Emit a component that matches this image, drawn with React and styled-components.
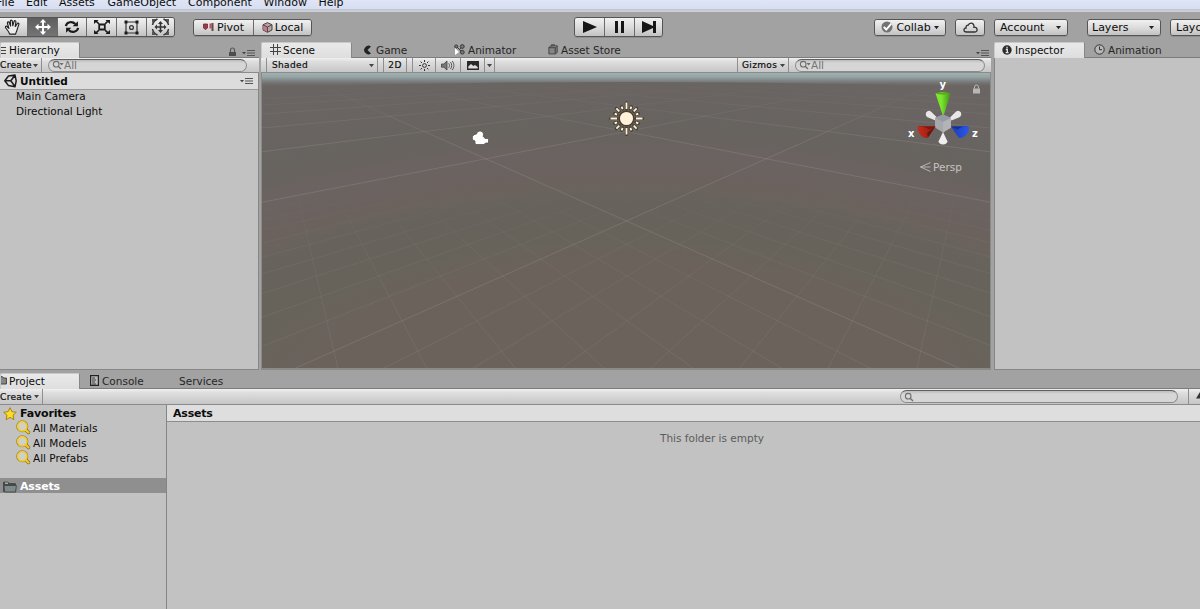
import React from 'react';
import styled, { createGlobalStyle } from 'styled-components';

const GlobalStyle = createGlobalStyle`
* {
  box-sizing: border-box;
}
body {
  margin: 0;
  background: #a2a2a2;
}
`

const Editor = styled.div`
display: flex;
flex-direction: column;
width: 1200px;
height: 609px;
overflow: hidden;
background: #a2a2a2;
color: #0c0c0c;
font-family: "DejaVu Sans", Verdana, sans-serif;
font-size: 10.5px;
white-space: nowrap;
`

const MenuBar = styled.div`
display: flex;
flex: none;
height: 12px;
padding-left: 1px;
overflow: hidden;
background: linear-gradient(#dfe5f5, #d7def0 9px, #a9afc0 10px, #e4e7f0 11px, #b9b9bb 12px);
`

const MenuItem = styled.span`
flex: none;
width: ${props => props.$w}px;
margin-top: -5px;
font-size: 11px;
line-height: 15px;

&:first-child {
  margin-left: -5px;
}
`

const Toolbar = styled.div`
display: flex;
flex: none;
align-items: center;
height: 30px;
`

const ButtonGroup = styled.div`
display: flex;
flex: none;
height: ${props => props.$h || 17}px;
margin-left: ${props => props.$ml || 0}px;
border: 1px solid #555;
border-radius: 3px;
overflow: hidden;
box-shadow: 0 1px 0 #8e8e8e;
`

const Button = styled.div`
display: flex;
flex: none;
align-items: center;
justify-content: ${props => props.$justify || 'center'};
gap: ${props => props.$gap || 0}px;
width: ${props => props.$w}px;
padding: ${props => props.$pad || 0};
font-size: 11px;
background: ${props => props.$active
    ? 'linear-gradient(#5e5e5e, #747474)'
    : 'linear-gradient(#f1f1f1, #dcdcdc 50%, #c2c2c2)'};

& + & {
  border-left: 1px solid #6b6b6b;
}
`

const Docks = styled.div`
display: flex;
flex: none;
height: 328px;
`

const Dock = styled.div`
display: flex;
flex: none;
flex-direction: column;
width: ${props => props.$w}px;
margin-right: ${props => props.$mr || 0}px;
`

const TabStrip = styled.div`
display: flex;
flex: none;
align-items: stretch;
height: 16px;
border-bottom: 1px solid #7c7c7c;
`

const Tab = styled.div`
display: flex;
flex: none;
align-items: center;
width: ${props => props.$w}px;
height: ${props => props.$active ? 16 : 15}px;
padding-left: ${props => props.$pl || 0}px;
gap: ${props => props.$gap || 0}px;
color: ${props => props.$active ? '#0c0c0c' : '#262626'};
border-radius: 2px 2px 0 0;
${props => props.$active && `
padding-bottom: 2px;
background: linear-gradient(#e9e9e9, #dedede);
border: 1px solid #c9c9c9;
border-bottom: 0;
border-right-color: #868686;
`}
`

const StripIcons = styled.div`
display: flex;
align-items: flex-end;
gap: 5px;
margin-left: auto;
padding-right: ${props => props.$pr}px;
`

const PanelBar = styled.div`
display: flex;
flex: none;
align-items: center;
height: ${props => props.$h || 15}px;
padding-left: ${props => props.$pl || 0}px;
border-bottom: 1px solid #8b8b8b;
background: linear-gradient(#f0f0f0, #dedede 25%, #c6c6c6);
`

const BarItem = styled.div`
display: flex;
flex: none;
align-items: center;
justify-content: ${props => props.$between ? 'space-between' : 'center'};
width: ${props => props.$w}px;
height: 100%;
margin-left: ${props => props.$ml || 0}px;
padding: ${props => props.$pad || 0};
font-size: 9px;
letter-spacing: 0.35px;
-webkit-text-stroke: 0.2px #111;
border-right: 1px solid #8e8e8e;
${props => props.$left && 'border-left: 1px solid #8e8e8e;'}
`

const SearchField = styled.div`
display: flex;
flex: none;
align-items: center;
width: ${props => props.$w}px;
height: 13px;
margin-left: ${props => props.$ml}px;
padding-left: 3px;
border: 1px solid #8a8a8a;
border-top-color: #5f5f5f;
border-radius: 7px;
background: linear-gradient(#bcbcbc, #d6d6d6 3px);
color: #747474;
font-size: 10.5px;
line-height: 10px;
`

const Panel = styled.div`
flex: 1;
background: #c2c2c2;
border: solid #868686;
border-width: 0 1px 1px ${props => props.$left ? 1 : 0}px;
`

const SceneHeader = styled.div`
display: flex;
align-items: center;
height: 17px;
padding: 0 5px 0 4px;
gap: 3px;
background: #dcdcdc;
border-bottom: 1px solid #999;
font-weight: bold;
font-size: 10.5px;

svg:last-child {
  margin-left: auto;
}
`

const TreeRow = styled.div`
display: flex;
align-items: center;
height: 15px;
padding-left: ${props => props.$pl}px;
padding-top: ${props => props.$bold ? 2 : 0}px;
padding-bottom: ${props => props.$pb || 0}px;
gap: ${props => props.$gap || 0}px;
font-size: ${props => props.$bold ? 11 : 10.5}px;
font-weight: ${props => props.$bold ? 'bold' : 'normal'};
letter-spacing: ${props => props.$bold ? -0.15 : 0}px;
${props => props.$selected && `
margin-top: 13px;
background: #8f8f8f;
color: #fff;
`}
`

const SceneView = styled.div`
flex: none;
height: 297px;
border: solid #8a8a87;
border-width: 0 1px 2px 1px;
`

const SceneCanvas = styled.svg`
display: block;
`

const ProjectDock = styled.div`
display: flex;
flex: 1;
flex-direction: column;
margin-top: 3px;
`

const ProjectBody = styled.div`
display: flex;
flex: 1;
background: #c2c2c2;
`

const Sidebar = styled.div`
flex: none;
width: 167px;
border-right: 1px solid #858585;
`

const Content = styled.div`
flex: 1;
`

const Breadcrumb = styled.div`
height: 17px;
padding-left: 6px;
background: #dedede;
border-bottom: 1px solid #8c8c8c;
font-weight: bold;
font-size: 11px;
line-height: 18px;
letter-spacing: -0.2px;
`

const EmptyNote = styled.div`
width: 118px;
margin: 10px 0 0 486px;
color: #5c5c5c;
text-align: center;
font-size: 10.5px;
`

const Arrow = ({ size = 5, color = '#222' }) => (
  <svg width={size} height={size} viewBox="0 0 6 6"><path d="M0 1.2h6L3 5z" fill={color} /></svg>
);

const MenuGlyph = () => (
  <svg width="13" height="8" viewBox="0 0 13 8">
    <path d="M0 3h4L2 5.3z" fill="#444" />
    <path d="M5 1.5h8M5 4h8M5 6.5h8" stroke="#555" strokeWidth="1.1" />
  </svg>
);

const LockGlyph = () => (
  <svg width="9" height="10" viewBox="0 0 9 10">
    <path d="M2.5 5V3a2 2 0 0 1 4 0v2" fill="none" stroke="#555" strokeWidth="1.1" />
    <path d="M1 5h7v4H1z" fill="#4d4d4d" />
  </svg>
);

const SearchGlyph = ({ arrow }) => (
  <svg width="12" height="10" viewBox="0 0 12 10">
    <circle cx="4.2" cy="4.2" r="2.8" fill="none" stroke="#6e6e6e" strokeWidth="1.1" />
    <path d="M6.2 6.2L9 9" stroke="#6e6e6e" strokeWidth="1.3" />
    {arrow && <path d="M7.5 3h4.2L9.6 5.4z" fill="#6e6e6e" />}
  </svg>
);

const HandIcon = () => (
  <svg width="17" height="17" viewBox="0 0 18 18" fill="#ececec" stroke="#222" strokeWidth="1.2" strokeLinejoin="round">
    <path d="M6 16C5.5 13 2 10.5 1.5 8.5c0-1.3 1.6-1.3 2.6.5L5.2 10 3.6 4.5c-.3-1.6 1.500-2 2-.5L7 7.5 6.7 2.500c0-1.700 1.900-1.700 2.100 0L9.300 7.2 10.6 2.700c.5-1.500 2.200-1 2 .5L11.900 8 14 5c.9-1.200 2.300-.4 1.700 1-1 2.600-1.500 4.500-2.200 6.500-.4 1.200-1 2-1.200 3.500z" />
  </svg>
);

const MoveIcon = () => (
  <svg width="18" height="18" viewBox="0 0 18 18">
    <path d="M9 1l3.200 3.500H10V8h3.500V5.800L17 9l-3.500 3.200V10H10v3.500h2.200L9 17l-3.200-3.500H8V10H4.500v2.200L1 9l3.500-3.200V8H8V4.500H5.800z" fill="#fff" />
  </svg>
);

const RotateIcon = () => (
  <svg width="16" height="16" viewBox="0 0 17 16">
    <path d="M2 7C2.700 2.500 9 1.500 12 4.800M15 9c-.7 4.500-7 5.500-10 2.200" fill="none" stroke="#1b1b1b" strokeWidth="2.3" />
    <path d="M14.800 2v5.300H9.200zM2.200 14V8.700h5.600z" fill="#1b1b1b" />
  </svg>
);

const ScaleIcon = () => (
  <svg width="18" height="16" viewBox="0 0 18 16" fill="#1b1b1b">
    <path d="M6.200 5.500h5.600v5H6.200z" fill="none" stroke="#1b1b1b" strokeWidth="1.8" />
    <path d="M1 1h4.500L4.300 2.200 6.500 4.200 5.200 5.300 3 3.300 1 5zM17 1h-4.500l1.200 1.200-2.200 2 1.300 1.100 2.200-2L17 5zM1 15h4.500l-1.200-1.200 2.200-2-1.300-1.100-2.200 2L1 11zM17 15h-4.500l1.200-1.200-2.200-2 1.300-1.100 2.200 2L17 11z" />
  </svg>
);

const RectIcon = () => (
  <svg width="17" height="17" viewBox="0 0 17 17">
    <path d="M3 3h11v11H3z" fill="none" stroke="#333" strokeWidth="1.2" />
    <path d="M1.500 1.500h3v3h-3zM12.500 1.500h3v3h-3zM1.500 12.500h3v3h-3zM12.500 12.500h3v3h-3z" fill="#1b1b1b" />
    <circle cx="8.5" cy="8.5" r="1.900" fill="none" stroke="#333" strokeWidth="1.3" />
  </svg>
);

const TransformIcon = () => (
  <svg width="19" height="18" viewBox="0 0 19 18">
    <path d="M9.500 3l2.500 3h-1.700v2.200h2.700V6.500L15.500 9 13 11.500V9.800h-2.700V12H12l-2.500 3L7 12h1.700V9.800H6v1.700L3.500 9 6 6.500v1.700h2.700V6H7z" fill="#333" />
    <path d="M1.500 7C2 4 4 2 6.500 1M12.500 1c2.500 1 4.500 3 5 6M17.500 11c-.5 3-2.500 5-5 6M6.500 17c-2.500-1-4.500-3-5-6" fill="none" stroke="#333" strokeWidth="1.500" />
    <path d="M1 1h4L1 5zM18 1h-4l4 4zM1 17h4l-4-4zM18 17h-4l4-4z" fill="#555" />
  </svg>
);

const PivotIcon = () => (
  <svg width="12" height="10" viewBox="0 0 12 10">
    <path d="M.5 2h4v4L2.500 7.500.5 6z" fill="#a83246" stroke="#5b3039" strokeWidth=".8" />
    <path d="M6.500 1.500h2v5h-2z" fill="#d3455c" /><path d="M8.500 1h2v8h-2z" fill="#5e4a4e" />
  </svg>
);

const CubeIcon = () => (
  <svg width="11" height="11" viewBox="0 0 11 11" strokeLinejoin="round">
    <path d="M5.500.7l4.500 2v5.300l-4.500 2.300L1 8V2.700z" fill="#b5a6a6" stroke="#4d4141" />
    <path d="M1.400 3.200l4.100 2v4.700L1.400 7.700z" fill="#c8788a" />
    <path d="M1 2.800l4.500 2.200L10 2.800M5.500 5v5" fill="none" stroke="#4d4141" strokeWidth=".9" />
  </svg>
);

const CheckIcon = () => (
  <svg width="12" height="12" viewBox="0 0 12 12">
    <circle cx="6" cy="6" r="5.500" fill="#737373" />
    <path d="M2.800 5.800l2.500 2.700 5-5.800" fill="none" stroke="#fff" strokeWidth="1.900" />
  </svg>
);

const CloudIcon = () => (
  <svg width="15" height="11" viewBox="0 0 15 11">
    <path d="M3.500 10C.2 10 .2 6 3 6c-.2-2 1-3 2.200-2.800C6.200.3 10.500.2 11 4c0 .8-.2 1.200-.2 1.200C15 5 15 10 12 10z" fill="none" stroke="#333" strokeWidth="1.300" />
  </svg>
);

const HashIcon = () => (
  <svg width="11" height="11" viewBox="0 0 11 11"><path d="M3.500 0v11M7.500 0v11M0 3.500h11M0 7.500h11" stroke="#444" /></svg>
);

const GameIcon = () => (
  <svg width="9" height="10" viewBox="0 0 9 10"><path d="M8 1.500A4.300 4.300 0 1 0 8 8.500L4.500 5z" fill="#222" /></svg>
);

const AnimatorIcon = () => (
  <svg width="11" height="11" viewBox="0 0 11 11" fill="#777" stroke="#333" strokeWidth=".9">
    <path d="M2.500 2.500l6 6M8.500 2.500l-3 3" />
    <circle cx="2.200" cy="2.500" r="1.600" /><circle cx="8.300" cy="2.500" r="1.900" /><circle cx="8.300" cy="8.200" r="1.900" />
    <path d="M1 4v7l4-3z" fill="#fff" stroke="none" />
  </svg>
);

const StoreIcon = () => (
  <svg width="10" height="11" viewBox="0 0 10 11" fill="#777" stroke="#444" strokeWidth=".8">
    <path d="M.8 3.500h6.500v6.500H.8zM7.300 3.500l2-1.500v6.500l-2 1.500M.8 3.500l2-1.700h6.500M3.500 2V.7h3V2" /><path d="M3 5v4M5 5v4" stroke="#999" />
  </svg>
);

const InfoIcon = () => (
  <svg width="10" height="10" viewBox="0 0 10 10"><circle cx="5" cy="5" r="4.700" fill="#2b2b2b" /><path d="M5 1.700v1.500M3.800 4.500h1.500v3M3.600 7.700h3" stroke="#e8e8e8" strokeWidth="1.300" fill="none" /></svg>
);

const ClockIcon = () => (
  <svg width="11" height="11" viewBox="0 0 11 11" fill="none" stroke="#333"><circle cx="5.500" cy="5.500" r="4.700" fill="#b8b8b8" /><path d="M5.500 2.500v3.200H8" /></svg>
);

const ListIcon = () => (
  <svg width="6" height="8" viewBox="0 0 6 8"><path d="M0 1.500h5M0 4.500h5M0 7.500h5" stroke="#444" /></svg>
);

const ConsoleIcon = () => (
  <svg width="9" height="11" viewBox="0 0 9 11"><path d="M.6.6h7.800v9.800H.6z" fill="#bbb" stroke="#222" strokeWidth="1.200" /><path d="M2 3h3M2 5h4M2 7h3M2 9h4" stroke="#333" strokeWidth=".9" /></svg>
);

const TabFolderIcon = () => (
  <svg width="6" height="9" viewBox="0 0 6 9"><path d="M-1 .7h2.500l1 1.300h2.900v6H-1z" fill="#888" stroke="#444" /></svg>
);

const SunIcon = () => (
  <svg width="11" height="11" viewBox="0 0 11 11" stroke="#333" fill="none"><circle cx="5.500" cy="5.500" r="1.900" /><path d="M5.500 0v2M5.500 9v2M0 5.500h2M9 5.500h2M1.600 1.600L3 3M8 8l1.400 1.400M1.600 9.400L3 8M8 3l1.400-1.400" /></svg>
);

const SoundIcon = () => (
  <svg width="14" height="11" viewBox="0 0 14 11"><path d="M.5 4h2.300L6 1v9L2.800 7.200H.5z" fill="#777" stroke="#444" strokeWidth=".8" /><path d="M7.700 3.300c1 1.500 1 3 0 4.500M9.500 2c1.600 2.400 1.600 4.700 0 7M11.300 1c2.100 3 2.100 6 0 9" fill="none" stroke="#555" /></svg>
);

const ImageIcon = () => (
  <svg width="12" height="9" viewBox="0 0 12 9"><path d="M0 0h12v9H0z" fill="#292929" /><path d="M1.300 7.500V5.500L4 3l2.300 2L8 4l2.700 2v1.500z" fill="#ddd" /></svg>
);

const UnityIcon = () => (
  <svg width="13" height="14" viewBox="0 0 13 14" fill="none" stroke="#1c1c1c" strokeWidth="1.500" strokeLinejoin="round">
    <path d="M4.500 2L11 1l1.200 5.800L11 12.800 4.500 11.600.8 6.800zM6.800 6.800H1M6.800 6.800L11 1.200M6.800 6.800L11 12.500" />
  </svg>
);

const StarIcon = () => (
  <svg width="14" height="14" viewBox="0 0 14 14"><path d="M7 .7l1.900 4 4.400.5L10 8.200l.9 4.500L7 10.400l-3.900 2.300L4 8.200.7 5.200l4.400-.5z" fill="#ffdc24" stroke="#a8821b" strokeLinejoin="round" /></svg>
);

const MagnifierIcon = () => (
  <svg width="16" height="15" viewBox="0 0 16 15" fill="none">
    <path d="M10.500 9.500l3 3" stroke="#8b7117" strokeWidth="3.400" strokeLinecap="round" />
    <circle cx="7.300" cy="6.300" r="4.600" stroke="#9a8030" strokeWidth="2.900" />
    <circle cx="7.300" cy="6.300" r="4.600" fill="#d0d0c9" stroke="#f2cd2d" strokeWidth="1.700" />
    <path d="M10.800 10l2.700 2.500" stroke="#f2cd2d" strokeWidth="2" strokeLinecap="round" />
  </svg>
);

const FolderIcon = () => (
  <svg width="14" height="12" viewBox="0 0 14 12"><path d="M.6 10.500V1.200h4.500l1 1.500h6.300v8z" fill="#42494a" stroke="#444" /><path d="M1 4.500h12.400l-.8 6.500H1.500z" fill="#7e898a" stroke="#3b4243" strokeWidth=".8" /><path d="M2 2.200h3" stroke="#ddd" /></svg>
);

const FilterIcon = () => (
  <svg width="14" height="11" viewBox="0 0 14 11" fill="#333"><path d="M0 7.500L4 1l4 6.500z" /><circle cx="7.500" cy="3" r="2.500" /><path d="M6 6h6v4.500H6z" /></svg>
);

// ground grid: cell size along both axes in homogeneous units
const CELL = 0.0643;
const ORIGIN = [364.5, 148];
const VANISH_RIGHT = [722, -11];
const VANISH_LEFT = [5, -11];

const project = (a, b) => {
  const w = 1 + a + b;
  return [0, 1].map(i => ((ORIGIN[i] + a * VANISH_RIGHT[i] + b * VANISH_LEFT[i]) / w).toFixed(1));
};

const gridPath = (from, to, step, skip) => {
  let d = '';
  for (let i = from; i <= to; i += step) {
    if (i % skip === 0) continue;
    const k = i * CELL;
    const near = -0.8 - k;
    d += `M${project(k, near)}L${project(k, 60)}M${project(near, k)}L${project(60, k)}`;
  }
  return d;
};

const rays = Array.from({ length: 16 }, (_, i) => {
  const t = i * Math.PI / 8;
  const r = i % 4 === 0 ? 9.5 : 10.2;
  const len = i % 4 === 0 ? 16 : i % 2 === 0 ? 14.3 : 12.8;
  return `M${Math.cos(t) * r} ${Math.sin(t) * r}L${Math.cos(t) * len} ${Math.sin(t) * len}`;
}).join('');

const Scene = () => (
  <SceneCanvas width="728" height="295" viewBox="0 0 728 295">
    <defs>
      <radialGradient id="ground" gradientUnits="userSpaceOnUse" cx="0" cy="0" r="400" gradientTransform="translate(364 325) scale(2.44 1)">
        <stop offset="0.34" stopColor="#6b625c" />
        <stop offset="0.4" stopColor="#67635b" />
        <stop offset="0.49" stopColor="#67635c" />
        <stop offset="0.54" stopColor="#6b625e" />
        <stop offset="0.61" stopColor="#6b6361" />
        <stop offset="0.68" stopColor="#67635f" />
        <stop offset="0.8" stopColor="#6a6563" />
        <stop offset="1" stopColor="#6c6665" />
      </radialGradient>
      <linearGradient id="sky" x1="0" y1="0" x2="0" y2="1">
        <stop offset="0" stopColor="#a0b1b2" />
        <stop offset="0.3" stopColor="#94a3a3" />
        <stop offset="0.65" stopColor="#7b7f7f" stopOpacity="0.8" />
        <stop offset="1" stopColor="#6d6765" stopOpacity="0" />
      </linearGradient>
      <linearGradient id="nearFade" x1="0" y1="0" x2="0" y2="1">
        <stop offset="0.36" stopColor="#000" />
        <stop offset="0.58" stopColor="#999" />
        <stop offset="1" stopColor="#fff" />
      </linearGradient>
      <linearGradient id="farFade" x1="0" y1="0" x2="0" y2="1">
        <stop offset="0.03" stopColor="#000" />
        <stop offset="0.25" stopColor="#fff" />
      </linearGradient>
      <linearGradient id="red" x1="0" x2="1"><stop offset="0" stopColor="#c52c1d" /><stop offset="1" stopColor="#8f1a0e" /></linearGradient>
      <linearGradient id="blue" x1="0" x2="1"><stop offset="0" stopColor="#1c3cae" /><stop offset="1" stopColor="#2b57ee" /></linearGradient>
      <linearGradient id="green" x1="0" x2="1"><stop offset="0.4" stopColor="#7ce52d" /><stop offset="1" stopColor="#3d9411" /></linearGradient>
      <mask id="nearMask"><rect width="728" height="295" fill="url(#nearFade)" /></mask>
      <mask id="farMask"><rect width="728" height="295" fill="url(#farFade)" /></mask>
    </defs>
    <rect width="728" height="295" fill="url(#ground)" />
    <path d={gridPath(-30, 30, 1, 10)} stroke="#96908a" strokeOpacity="0.23" fill="none" mask="url(#nearMask)" />
    <path d={gridPath(-10, 60, 10)} stroke="#96918b" strokeOpacity="0.36" fill="none" mask="url(#farMask)" />
    <path d="M0 0H728V14Q364 4 0 14Z" fill="url(#sky)" />

    <path d="M213 70.500v-2.500q-3.500-1-2.500-4.500 1-2.500 4-2.500.5-3 3.500-3t3.500 3q0 1-.5 2.500 1.500 0 2 2h3.500v4.500h-3l-1.500 1.500h-7.500z" fill="#fff" stroke="#4f4a45" strokeWidth=".7" />

    <g transform="translate(364.5 45.5)">
      <path d={rays} stroke="#4a4032" strokeWidth="3.200" strokeLinecap="round" />
      <circle r="7.300" fill="#fff2d8" stroke="#4a4032" strokeWidth="1.500" />
      <path d={rays} stroke="#fff2d8" strokeWidth="1.800" />
    </g>

    <path d="M664 39.500q3-3.500 6 0l5 5-1.500 3-8.500-3.500q-2-2-1-4.500zM699 39.500q-3-3.500-6 0l-5 5 1.500 3 8.500-3.500q2-2 1-4.500z" fill="#e7e7e7" />
    <path d="M673 45l8-3.500 8 3.500v9.500l-8 5-8-5z" fill="#a6a8ac" />
    <path d="M673 45l8-3.500 8 3.500-8 4z" fill="#969aa4" /><path d="M681 49l8-4v9.500l-8 5z" fill="#b3b4b6" />
    <path d="M673.500 20.500q7.500-3 15 0l-6.500 21h-1.500z" fill="url(#green)" />
    <path d="M673.500 20.500q7.500-2 15 0-7.500 2-15 0z" fill="#57a81d" />
    <path d="M673.500 53.500l-7.500 11q-3 1.500-6.500-1.500-5-5-3.500-10z" fill="url(#red)" />
    <path d="M673.500 53.500l-7.500 11-1-4.500z" fill="#4a0f08" opacity=".6" />
    <path d="M673.500 53.500h-17.500q8 0 11 3z" fill="#7d170d" />
    <path d="M689 53.500l7.500 11q3 1.500 6.500-1.500 5-5 3.500-10z" fill="url(#blue)" />
    <path d="M689 53.500h17q-8 0-10 3z" fill="#14308d" />
    <path d="M681 59l-4.500 9.500q1 3 4.500 3t4.500-3z" fill="#efefef" />
    <g fill="#fff" fontFamily="DejaVu Sans" fontSize="10" fontWeight="bold">
      <text x="677.500" y="15">y</text><text x="646" y="64">x</text><text x="710" y="64">z</text>
    </g>
    <path d="M668.500 89.500L658.500 94l10 4.500M658.500 94h10" stroke="#bdbbb8" fill="none" strokeWidth=".9" />
    <text x="671" y="98" fill="#c6c4c2" fontFamily="DejaVu Sans" fontSize="10.500">Persp</text>
    <path d="M711 15.500h7v5h-7z" fill="#b9b7b5" /><path d="M712.500 15.500v-1.500a2 2 0 0 1 4 0v1.500" stroke="#b9b7b5" fill="none" />
  </SceneCanvas>
);

const menus = [
  { text: 'File', w: 30 },
  { text: 'Edit', w: 33 },
  { text: 'Assets', w: 48.5 },
  { text: 'GameObject', w: 80.5 },
  { text: 'Component', w: 75.5 },
  { text: 'Window', w: 55 },
  { text: 'Help', w: 40 }
];

const tools = [
  { icon: HandIcon, w: 29 },
  { icon: MoveIcon, w: 30, active: true },
  { icon: RotateIcon, w: 29 },
  { icon: ScaleIcon, w: 30 },
  { icon: RectIcon, w: 30 },
  { icon: TransformIcon, w: 28 }
];

const favorites = ['All Materials', 'All Models', 'All Prefabs'];

const App = () => {
  return (
    <Editor>
      <GlobalStyle />
      <MenuBar>
        {menus.map(menu => <MenuItem key={menu.text} $w={menu.w}>{menu.text}</MenuItem>)}
      </MenuBar>
      <Toolbar>
        <ButtonGroup $h={20} $ml={-3}>
          {tools.map(({ icon: Icon, w, active }, i) => (
            <Button key={i} $w={w} $active={active}><Icon /></Button>
          ))}
        </ButtonGroup>
        <ButtonGroup $ml={18}>
          <Button $w={59} $gap={2}><PivotIcon />Pivot</Button>
          <Button $w={58} $gap={2}><CubeIcon />Local</Button>
        </ButtonGroup>
        <ButtonGroup $h={20} $ml={262}>
          <Button $w={29}><svg width="14" height="12"><path d="M0 0l14 6-14 6z" fill="#161616" /></svg></Button>
          <Button $w={30}><svg width="9" height="12"><path d="M0 0h3v12H0zM6 0h3v12H6z" fill="#161616" /></svg></Button>
          <Button $w={28}><svg width="14" height="12"><path d="M0 0l11 5V0h3v12h-3V7L0 12z" fill="#161616" /></svg></Button>
        </ButtonGroup>
        <ButtonGroup $ml={211}>
          <Button $w={70} $gap={3}><CheckIcon />Collab<Arrow /></Button>
        </ButtonGroup>
        <ButtonGroup $ml={9}>
          <Button $w={28}><CloudIcon /></Button>
        </ButtonGroup>
        <ButtonGroup $ml={9}>
          <Button $w={72} $justify="space-between" $pad="0 6px 0 5px">Account<Arrow /></Button>
        </ButtonGroup>
        <ButtonGroup $ml={19}>
          <Button $w={72} $justify="space-between" $pad="0 6px 0 4px">Layers<Arrow /></Button>
        </ButtonGroup>
        <ButtonGroup $ml={9}>
          <Button $w={72} $justify="flex-start" $pad="0 6px 0 5px">Layout</Button>
        </ButtonGroup>
      </Toolbar>

      <Docks>
        <Dock $w={259} $mr={2}>
          <TabStrip>
            <Tab $active $w={80} $gap={2}><ListIcon />Hierarchy</Tab>
            <StripIcons $pr={4}><LockGlyph /><MenuGlyph /></StripIcons>
          </TabStrip>
          <PanelBar>
            <BarItem $w={42} $between $pad="0 3px 0 0">Create<Arrow color="#444" /></BarItem>
            <SearchField $w={199} $ml={6}><SearchGlyph arrow />All</SearchField>
          </PanelBar>
          <Panel>
            <SceneHeader><UnityIcon />Untitled<MenuGlyph /></SceneHeader>
            <TreeRow $pl={16} $pb={3}>Main Camera</TreeRow>
            <TreeRow $pl={16} $pb={3}>Directional Light</TreeRow>
          </Panel>
        </Dock>

        <Dock $w={730} $mr={3}>
          <TabStrip>
            <Tab $active $w={91} $pl={8} $gap={2}><HashIcon />Scene</Tab>
            <Tab $w={101} $pl={11} $gap={4}><GameIcon />Game</Tab>
            <Tab $w={93} $pl={1} $gap={3}><AnimatorIcon />Animator</Tab>
            <Tab $w={90} $pl={2} $gap={3}><StoreIcon />Asset Store</Tab>
            <StripIcons $pr={2}><MenuGlyph /></StripIcons>
          </TabStrip>
          <PanelBar $pl={5}>
            <BarItem $left $w={112} $between $pad="0 3px 0 5px">Shaded<Arrow color="#444" /></BarItem>
            <BarItem $left $w={24} $ml={5}>2D</BarItem>
            <BarItem $left $w={24} $ml={5}><SunIcon /></BarItem>
            <BarItem $w={25}><SoundIcon /></BarItem>
            <BarItem $w={24}><ImageIcon /></BarItem>
            <BarItem $w={10}><Arrow color="#444" /></BarItem>
            <BarItem $left $w={52} $ml={242} $between $pad="0 3px 0 4px">Gizmos<Arrow color="#444" /></BarItem>
            <SearchField $w={190} $ml={6}><SearchGlyph arrow />All</SearchField>
          </PanelBar>
          <SceneView><Scene /></SceneView>
        </Dock>

        <Dock $w={208}>
          <TabStrip>
            <Tab $active $w={91} $pl={7} $gap={3}><InfoIcon />Inspector</Tab>
            <Tab $w={100} $pl={9} $gap={3}><ClockIcon />Animation</Tab>
          </TabStrip>
          <Panel $left />
        </Dock>
      </Docks>

      <ProjectDock>
        <TabStrip>
          <Tab $active $w={80} $gap={2}><TabFolderIcon />Project</Tab>
          <Tab $w={99} $pl={10} $gap={3}><ConsoleIcon />Console</Tab>
          <Tab $w={80}>Services</Tab>
        </TabStrip>
        <PanelBar $h={16}>
          <BarItem $w={43} $between $pad="0 3px 0 0">Create<Arrow color="#444" /></BarItem>
          <SearchField $w={278} $ml={857}><SearchGlyph /></SearchField>
          <BarItem $left $w={30} $ml={10}><FilterIcon /></BarItem>
        </PanelBar>
        <ProjectBody>
          <Sidebar>
            <TreeRow $pl={3} $gap={3} $bold><StarIcon />Favorites</TreeRow>
            {favorites.map(name => (
              <TreeRow key={name} $pl={15} $gap={2}><MagnifierIcon />{name}</TreeRow>
            ))}
            <TreeRow $pl={3} $gap={3} $bold $selected><FolderIcon />Assets</TreeRow>
          </Sidebar>
          <Content>
            <Breadcrumb>Assets</Breadcrumb>
            <EmptyNote>This folder is empty</EmptyNote>
          </Content>
        </ProjectBody>
      </ProjectDock>
    </Editor>
  );
};

export default App;
